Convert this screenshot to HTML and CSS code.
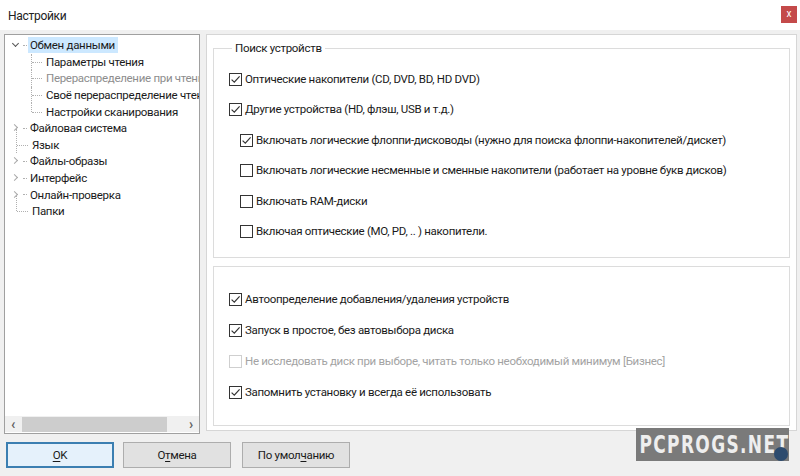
FILE: index.html
```html
<!DOCTYPE html>
<html lang="ru">
<head>
<meta charset="utf-8">
<title>Настройки</title>
<link rel="stylesheet" href="styles.css">
</head>
<body>
<div class="window">
  <div class="titlebar">
    <span class="title">Настройки</span>
    <span class="close">x</span>
  </div>

  <div class="main">
    <div class="tree">
      <ul class="nodes">
        <li class="node open">
          <span class="chev down"></span><span class="dash"></span><span class="label selected">Обмен данными</span>
        </li>
        <li class="child"><span class="branch"></span><span class="label">Параметры чтения</span></li>
        <li class="child"><span class="branch"></span><span class="label disabled">Перераспределение при чтении</span></li>
        <li class="child"><span class="branch"></span><span class="label">Своё перераспределение чтения</span></li>
        <li class="child last"><span class="branch"></span><span class="label">Настройки сканирования</span></li>
        <li class="node"><span class="chev"></span><span class="dash"></span><span class="label">Файловая система</span></li>
        <li class="node leaf"><span class="branch"></span><span class="label">Язык</span></li>
        <li class="node"><span class="chev"></span><span class="dash"></span><span class="label">Файлы-образы</span></li>
        <li class="node"><span class="chev"></span><span class="dash"></span><span class="label">Интерфейс</span></li>
        <li class="node"><span class="chev"></span><span class="dash"></span><span class="label">Онлайн-проверка</span></li>
        <li class="node leaf last"><span class="branch"></span><span class="label">Папки</span></li>
      </ul>
      <div class="hscroll">
        <span class="arrow">&lsaquo;</span>
        <span class="track"><span class="thumb"></span></span>
        <span class="arrow">&rsaquo;</span>
      </div>
    </div>

    <div class="panel">
      <fieldset class="group first">
        <legend>Поиск устройств</legend>
        <label class="check on">Оптические накопители (CD, DVD, BD, HD DVD)</label>
        <label class="check on">Другие устройства (HD, флэш, USB и т.д.)</label>
        <label class="check on sub">Включать логические флоппи-дисководы (нужно для поиска флоппи-накопителей/дискет)</label>
        <label class="check sub">Включать логические несменные и сменные накопители (работает на уровне букв дисков)</label>
        <label class="check sub">Включать RAM-диски</label>
        <label class="check sub">Включая оптические (MO, PD, .. ) накопители.</label>
      </fieldset>
      <fieldset class="group second">
        <label class="check on">Автоопределение добавления/удаления устройств</label>
        <label class="check on">Запуск в простое, без автовыбора диска</label>
        <label class="check off-dim">Не исследовать диск при выборе, читать только необходимый минимум [Бизнес]</label>
        <label class="check on">Запомнить установку и всегда её использовать</label>
      </fieldset>
    </div>
  </div>

  <div class="buttons">
    <button class="btn default"><u>O</u>K</button>
    <button class="btn">О<u>т</u>мена</button>
    <button class="btn">По умол<u>ч</u>анию</button>
  </div>

  <div class="stamp"><span class="stamp-text">PCPROGS.NET</span><span class="dot"></span></div>
</div>
</body>
</html>
```

FILE: styles.css
```css
* { box-sizing: border-box; }

html, body {
  margin: 0;
  padding: 0;
}

body {
  width: 800px;
  height: 476px;
  overflow: hidden;
  background: #f0f0f0;
  font-family: Roboto, "Noto Sans", sans-serif;
  font-size: 11.5px;
  letter-spacing: -0.3px;
  color: #1a1a1a;
}

.window {
  position: relative;
  width: 800px;
  height: 476px;
  overflow: hidden;
}

/* title bar */
.titlebar {
  height: 30px;
  background: #fff;
  display: flex;
  align-items: center;
  justify-content: space-between;
  padding: 0 3px 0 8px;
}

.title {
  font-size: 12px;
  color: #222;
  margin-top: 1px;
}

.close {
  width: 16px;
  height: 17px;
  background: #c44a4a;
  color: #fff;
  font-size: 10px;
  line-height: 15px;
  text-align: center;
  margin-top: -2px;
  letter-spacing: 0;
}

/* two-pane area */
.main {
  display: flex;
  gap: 6px;
  padding: 4px 3px 0 4px;
  height: 412px;
  align-items: flex-start;
}

.tree {
  width: 196px;
  height: 400px;
  background: #fff;
  border: 1px solid #a0a0a0;
  display: flex;
  flex-direction: column;
  justify-content: space-between;
  overflow: hidden;
}

.nodes {
  list-style: none;
  margin: 0;
  padding: 2px 0 0 0;
  white-space: nowrap;
  overflow: hidden;
}

.nodes li {
  display: flex;
  align-items: center;
  height: 16.6px;
  position: relative;
}

.node { padding-left: 5px; }

.chev {
  width: 10px;
  height: 10px;
  position: relative;
  flex: none;
}
.chev::before {
  content: "";
  position: absolute;
  left: 2px;
  top: 2px;
  width: 4px;
  height: 4px;
  border-right: 1.3px solid #a8a8a8;
  border-bottom: 1.3px solid #a8a8a8;
  transform: rotate(-45deg);
}
.chev.down::before {
  left: 3px;
  top: 1px;
  border-color: #555;
  transform: rotate(45deg);
}

.dash {
  width: 4px;
  height: 1px;
  margin: 0 1px 0 3px;
  border-top: 1px dotted #b0b0b0;
  flex: none;
}

.label {
  padding: 0 2px;
  line-height: 16px;
}
.label.selected {
  background: #cce8ff;
  padding: 0 3px 0 2px;
}
.label.disabled { color: #8d8d8d; }

/* child rows and leaves drawn with dotted connectors */
.child { padding-left: 26px; }
.child .branch,
.leaf .branch {
  width: 12px;
  height: 100%;
  position: relative;
  flex: none;
  margin-right: 1px;
}
.child .branch::before,
.leaf .branch::before {
  content: "";
  position: absolute;
  left: 0;
  top: 0;
  bottom: 0;
  border-left: 1px dotted #b0b0b0;
}
.child.last .branch::before,
.leaf.last .branch::before { bottom: 50%; }
.child .branch::after,
.leaf .branch::after {
  content: "";
  position: absolute;
  left: 1px;
  right: 1px;
  top: 50%;
  border-top: 1px dotted #b0b0b0;
}
.leaf { padding-left: 11px; }
.leaf .branch { width: 13px; }
.leaf .branch::before { top: -8px; }

.hscroll {
  height: 16px;
  display: flex;
  align-items: center;
  background: #f0f0f0;
  margin-bottom: 1px;
}
.hscroll .arrow {
  width: 16px;
  text-align: center;
  color: #606060;
  font-size: 14px;
  line-height: 14px;
  font-weight: bold;
}
.track {
  flex: 1;
  height: 100%;
  display: flex;
  align-items: center;
}
.thumb {
  width: 145px;
  height: 15px;
  background: #cdcdcd;
  margin-left: 1px;
}

/* right pane with group boxes */
.panel {
  flex: 1;
  height: 397px;
  background: #fff;
  border: 1px solid #d6d6d6;
  padding: 6px 6px 4px 6px;
  display: flex;
  flex-direction: column;
  gap: 8px;
}

.group {
  margin: 0;
  border: 1px solid #dcdcdc;
  display: flex;
  flex-direction: column;
  align-items: flex-start;
}

.group legend {
  padding: 0 3px;
  margin-left: 3px;
  color: #1a1a1a;
}

.group.first {
  height: 217px;
  padding: 16px 8px 0 15px;
  gap: 13.4px;
}

.group.second {
  flex: 1;
  padding: 24px 8px 0 15px;
  gap: 13.9px;
}

.check {
  display: flex;
  align-items: center;
  gap: 3px;
  line-height: 17px;
  white-space: nowrap;
}
.check::before {
  content: "";
  width: 13px;
  height: 13px;
  border: 1px solid #333;
  background: #fff;
  flex: none;
  box-sizing: border-box;
}
.check.on::before {
  background:
    url("data:image/svg+xml,%3Csvg xmlns='http://www.w3.org/2000/svg' viewBox='0 0 11 11'%3E%3Cpath d='M1.6 5.6 L4.3 8.2 L9.6 2.4' fill='none' stroke='%23333' stroke-width='1.2'/%3E%3C/svg%3E") center / 11px 11px no-repeat,
    #fff;
}
.check.sub { margin-left: 11px; }
.check.off-dim { color: #a3a3a3; }
.check.off-dim::before { border-color: #cfcfcf; }

/* dialog buttons */
.buttons {
  display: flex;
  gap: 9px;
  padding: 0 0 0 6px;
}
.btn {
  width: 108px;
  height: 26px;
  background: #e1e1e1;
  border: 1px solid #adadad;
  font: inherit;
  letter-spacing: inherit;
  color: #1a1a1a;
  padding: 0;
}
.btn + .btn + .btn { margin-left: 2px; }
.btn.default {
  border: 2px solid #3c7fb1;
  background: #e5f1fb;
}
.btn u { text-decoration-thickness: 1px; text-underline-offset: 2px; }

/* site stamp in the corner */
.stamp {
  position: absolute;
  left: 636px;
  top: 428px;
  width: 153px;
  height: 33px;
  background: #7a7a7a;
  color: #eeeeee;
  overflow: hidden;
}
.stamp-text {
  display: block;
  width: 210px;
  font-family: "DejaVu Sans", sans-serif;
  font-weight: bold;
  font-size: 25px;
  letter-spacing: 2px;
  line-height: 33px;
  padding-left: 5px;
  white-space: nowrap;
  transform: scaleX(0.68);
  transform-origin: left center;
}
.stamp .dot {
  position: absolute;
  right: 1px;
  bottom: 0;
  width: 14px;
  height: 14px;
  border-radius: 50%;
  background: #2d4b6e;
}
```
